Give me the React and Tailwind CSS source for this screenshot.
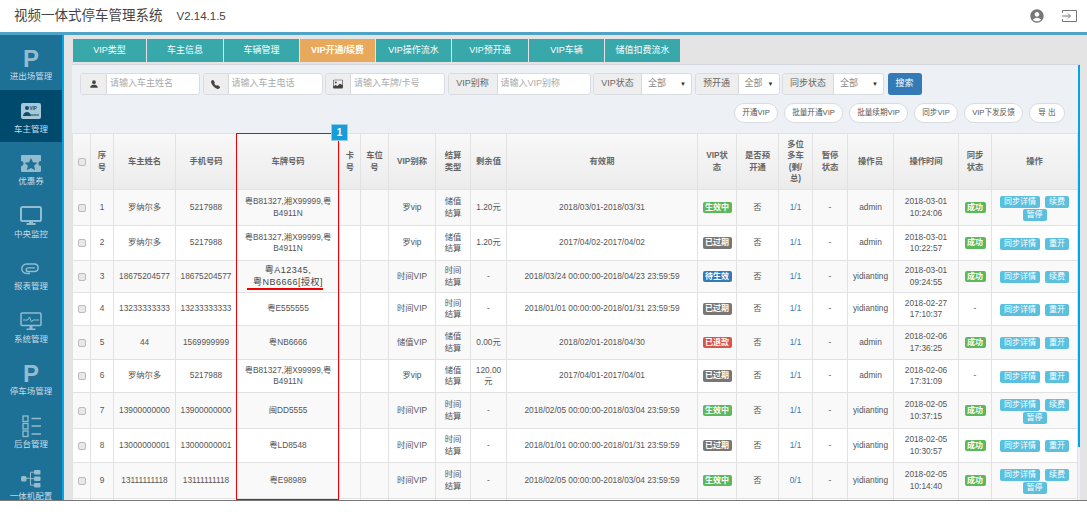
import React from 'react';
import { MdAccountCircle } from 'react-icons/md';
import { BsPersonFill, BsTelephoneFill, BsImage } from 'react-icons/bs';

const FONT = "font-['Liberation_Sans','Noto_Sans_CJK_SC',sans-serif]";

const PIcon = () => <span className="text-[24px] font-bold leading-[21px] text-[#93bccf]">P</span>;

const VipIcon = () => (
  <svg width="20" height="17" viewBox="0 0 20 17">
    <rect width="20" height="16" rx="2" fill="#a8c8d8" />
    <circle cx="6" cy="5" r="2" fill="#0f4c6e" />
    <text x="8.500" y="7" fontSize="4.500" fontWeight="bold" fill="#0f4c6e" fontFamily="Liberation Sans">VIP</text>
    <path d="M2 13c.5-3 2-4 4-4s3.500 1 4 4z" fill="#0f4c6e" />
    <path d="M10 12h8" stroke="#0f4c6e" />
  </svg>
);

const CouponIcon = () => (
  <svg width="20" height="17" viewBox="0 0 20 17">
    <path d="M1 0h18a1 1 0 011 1v5a2.500 2.500 0 000 5v5a1 1 0 01-1 1H1a1 1 0 01-1-1v-5a2.500 2.500 0 000-5V1a1 1 0 011-1z" fill="#93bccf" />
    <path d="M10 3l2 4.300 4.500.5-3.400 3 1 4.400L10 13l-4.100 2.200 1-4.400-3.400-3 4.500-.5z" fill="#1d7096" />
  </svg>
);

const MonitorIcon = () => (
  <svg width="22" height="20" viewBox="0 0 22 20" fill="none">
    <rect x="1" y="1" width="20" height="14" rx="1.500" stroke="#93bccf" strokeWidth="2" />
    <path d="M9 15v2H6.500v2h9v-2H13v-2z" fill="#93bccf" />
  </svg>
);

const ClipIcon = () => (
  <svg width="20" height="16" viewBox="0 0 20 16" fill="none" stroke="#93bccf" strokeWidth="1.400">
    <path d="M9 12.500H5.500a4.700 4.700 0 010-9.500h8.500a3.800 3.800 0 010 7.500H7a1.800 1.800 0 010-3.600h7" />
  </svg>
);

const SystemIcon = () => (
  <svg width="22" height="19" viewBox="0 0 22 19" fill="none">
    <rect x="1" y="1" width="20" height="12.500" rx="1" stroke="#93bccf" strokeWidth="1.500" />
    <path d="M3 8h5l1.500-3 2 5 1.500-2h6" stroke="#93bccf" />
    <path d="M9.500 13.500h3v3h3v1.500h-9v-1.500h3z" fill="#93bccf" />
  </svg>
);

const ListIcon = () => (
  <svg width="19" height="23" viewBox="0 0 19 23" fill="none" stroke="#93bccf" strokeWidth="1.300">
    <rect x="1" y="1" width="5" height="5.500" />
    <rect x="1" y="8.500" width="5" height="5.500" />
    <rect x="1" y="16" width="5" height="5.500" />
    <path d="M9.500 3.500H19M9.500 11H19M9.500 19H19" />
  </svg>
);

const TreeIcon = () => (
  <svg width="20" height="18" viewBox="0 0 20 18" fill="#93bccf">
    <rect x="0" y="6" width="5.500" height="5.500" rx="1.500" />
    <rect x="13" y="0" width="6.500" height="4.500" rx="1" />
    <rect x="13" y="6.500" width="6.500" height="4.500" rx="1" />
    <rect x="13" y="13" width="6.500" height="4.500" rx="1" />
    <path d="M5 8.300h4.500M13 8.700H9.500M13 2.200h-3.500v13H13" fill="none" stroke="#93bccf" />
  </svg>
);

const LogoutIcon = () => (
  <svg width="15" height="12" viewBox="0 0 15 12" fill="none" stroke="#777" strokeWidth="1">
    <path d="M.5 3V.500h14v11H.500V9" />
    <path d="M0 6h8M6 3.500L8.500 6 6 8.500" />
  </svg>
);

const MENU = [
  { label: '进出场管理', icon: <PIcon /> },
  { label: '车主管理', icon: <VipIcon />, active: true },
  { label: '优惠券', icon: <CouponIcon /> },
  { label: '中央监控', icon: <MonitorIcon /> },
  { label: '报表管理', icon: <ClipIcon /> },
  { label: '系统管理', icon: <SystemIcon /> },
  { label: '停车场管理', icon: <PIcon /> },
  { label: '后台管理', icon: <ListIcon /> },
  { label: '一体机配置', icon: <TreeIcon /> },
];

const TABS = [
  { label: 'VIP类型', w: 'w-[73px] ml-[1px]' },
  { label: '车主信息', w: 'w-[76px]' },
  { label: '车辆管理', w: 'w-[75px]' },
  { label: 'VIP开通/续费', w: 'w-[75px]', active: true },
  { label: 'VIP操作流水', w: 'w-[75px]' },
  { label: 'VIP预开通', w: 'w-[76px]' },
  { label: 'VIP车辆', w: 'w-[75px]' },
  { label: '储值扣费流水', w: 'w-[75px]' },
];

const COLS = [18, 23, 62, 61, 103, 21, 28, 47, 35, 36, 191, 39, 42, 34, 35, 46, 65, 33, 86];

const HEADS = ['', '序号', '车主姓名', '手机号码', '车牌号码', '卡号', '车位号', 'VIP别称', '结算类型', '剩余值', '有效期', 'VIP状态', '是否预开通', '多位多车(剩/总)', '暂停状态', '操作员', '操作时间', '同步状态', '操作'];

// padding that makes the narrow header cells wrap where the reference does
const HEAD_PAD = {
  1: 'px-[4px]',
  5: 'px-[3px]',
  6: 'px-[3px]',
  8: 'px-[8px]',
  11: 'px-[6px]',
  12: 'px-[6px]',
  13: 'px-[8px]',
  14: 'px-[7px]',
  17: 'px-[6px]',
};

const STATUS = {
  active: { text: '生效中', cls: 'bg-[#5cb85c]' },
  expired: { text: '已过期', cls: 'bg-[#777777]' },
  pending: { text: '待生效', cls: 'bg-[#337ab7]' },
  refund: { text: '已退款', cls: 'bg-[#d9534f]' },
};

const PLATES = '粤B81327,湘X99999,粤B4911N';

const ROWS = [
  { h: 'h-[36px]', name: '罗纳尔多', phone: '5217988', plate: PLATES, alias: '罗vip', type: '储值结算', left: '1.20元', period: '2018/03/01-2018/03/31', status: 'active', multi: '1/1', op: 'admin', date: '2018-03-01', time: '10:24:06', sync: true, actions: ['续费', '暂停'] },
  { h: 'h-[35px]', name: '罗纳尔多', phone: '5217988', plate: PLATES, alias: '罗vip', type: '储值结算', left: '1.20元', period: '2017/04/02-2017/04/02', status: 'expired', multi: '1/1', op: 'admin', date: '2018-03-01', time: '10:22:57', sync: true, actions: ['重开'] },
  { h: 'h-[32px]', name: '18675204577', phone: '18675204577', auth: true, alias: '时间VIP', type: '时间结算', left: '-', period: '2018/03/24 00:00:00-2018/04/23 23:59:59', status: 'pending', multi: '1/1', op: 'yidianting', date: '2018-03-01', time: '09:24:55', sync: true, actions: ['续费'] },
  { h: 'h-[33px]', name: '13233333333', phone: '13233333333', plate: '粤E555555', alias: '时间VIP', type: '时间结算', left: '-', period: '2018/01/01 00:00:00-2018/01/31 23:59:59', status: 'expired', multi: '1/1', op: 'yidianting', date: '2018-02-27', time: '17:10:37', sync: false, actions: ['重开'] },
  { h: 'h-[34px]', name: '44', phone: '1569999999', plate: '粤NB6666', alias: '储值VIP', type: '储值结算', left: '0.00元', period: '2018/02/01-2018/04/30', status: 'refund', multi: '1/1', op: 'admin', date: '2018-02-06', time: '17:36:25', sync: true, actions: ['重开'] },
  { h: 'h-[33px]', name: '罗纳尔多', phone: '5217988', plate: PLATES, alias: '罗vip', type: '储值结算', left: '120.00元', period: '2017/04/01-2017/04/01', status: 'expired', multi: '1/1', op: 'admin', date: '2018-02-06', time: '17:31:09', sync: false, actions: ['重开'] },
  { h: 'h-[36px]', name: '13900000000', phone: '13900000000', plate: '闽DD5555', alias: '时间VIP', type: '时间结算', left: '-', period: '2018/02/05 00:00:00-2018/03/04 23:59:59', status: 'active', multi: '1/1', op: 'yidianting', date: '2018-02-05', time: '10:37:15', sync: true, actions: ['续费', '暂停'] },
  { h: 'h-[34px]', name: '13000000001', phone: '13000000001', plate: '粤LD8548', alias: '时间VIP', type: '时间结算', left: '-', period: '2018/01/01 00:00:00-2018/01/31 23:59:59', status: 'expired', multi: '1/1', op: 'yidianting', date: '2018-02-05', time: '10:30:57', sync: true, actions: ['重开'] },
  { h: 'h-[36px]', name: '13111111118', phone: '13111111118', plate: '粤E98989', alias: '时间VIP', type: '时间结算', left: '-', period: '2018/02/05 00:00:00-2018/03/04 23:59:59', status: 'active', multi: '0/1', op: 'yidianting', date: '2018-02-05', time: '10:14:40', sync: true, actions: ['续费', '暂停'] },
];

const Addon = ({ w, children }) => (
  <div className={`${w} h-full flex items-center justify-center bg-[#eeeeee] text-[#666] border-r border-[#d8d8d8] shrink-0`}>
    {children}
  </div>
);

const InputGroup = ({ w, addonW, addon, placeholder }) => (
  <div className={`${w} h-[22px] flex rounded-[3px] border border-[#d8dbe0] bg-white overflow-hidden`}>
    <Addon w={addonW}>{addon}</Addon>
    <div className="flex-1 flex items-center pl-[3px] text-[9px] text-[#aaaaaa] whitespace-nowrap overflow-hidden">{placeholder}</div>
  </div>
);

const SelectGroup = ({ w, addonW, label }) => (
  <div className={`${w} h-[22px] flex rounded-[3px] border border-[#d8dbe0] bg-white overflow-hidden`}>
    <Addon w={addonW}><span className="text-[9px]">{label}</span></Addon>
    <div className="flex-1 flex items-center justify-between pl-[6px] pr-[5px] text-[9px] text-[#888]">
      <span>全部</span>
      <span className="text-[6px] text-[#333]">▼</span>
    </div>
  </div>
);

const PillButton = ({ w, children }) => (
  <button className={`${w} h-[20px] rounded-full border border-[#d8dbe0] bg-white text-[7.600px] text-[#555] whitespace-nowrap`}>
    {children}
  </button>
);

const Info = ({ children }) => (
  <span className="inline-block h-[12px] px-[4px] mx-[2.500px] rounded-[2px] bg-[#5bc0de] text-white text-[8px] leading-[12px] whitespace-nowrap">
    {children}
  </span>
);

const Badge = ({ cls, children }) => (
  <span className={`inline-block h-[11.500px] px-[2.500px] rounded-[2px] text-white text-[8px] font-bold leading-[11.500px] whitespace-nowrap ${cls}`}>
    {children}
  </span>
);

const Checkbox = () => (
  <span className="inline-block align-middle w-[8px] h-[8px] rounded-[2px] border border-[#bbb] bg-[#e8e8e8]" />
);

const cell = 'border border-[#e2e2e2] px-[1px] text-center align-middle';

function Row({ row, index }) {
  const st = STATUS[row.status];
  return (
    <tr className={`${row.h} ${index % 2 === 0 ? 'bg-[#f9f9f9]' : 'bg-white'}`}>
      <td className={cell}><Checkbox /></td>
      <td className={cell}>{index + 1}</td>
      <td className={cell}>{row.name}</td>
      <td className={cell}>{row.phone}</td>
      <td className={`${cell} px-[6px]`}>
        {row.auth ? (
          <div className="text-[9px] leading-[12px] tracking-[0.500px] text-[#444]">
            粤A12345,
            <br />
            <span className="inline-block -ml-[6px] pl-[6px] border-b-2 border-[#f00000] leading-[11px] whitespace-nowrap">粤NB6666[授权]</span>
          </div>
        ) : (
          row.plate
        )}
      </td>
      <td className={cell} />
      <td className={cell} />
      <td className={cell}>{row.alias}</td>
      <td className={`${cell} px-[8px]`}>{row.type}</td>
      <td className={cell}>{row.left}</td>
      <td className={cell}>{row.period}</td>
      <td className={cell}><Badge cls={st.cls}>{st.text}</Badge></td>
      <td className={cell}>否</td>
      <td className={`${cell} text-[#337ab7]`}>{row.multi}</td>
      <td className={cell}>-</td>
      <td className={cell}>{row.op}</td>
      <td className={cell}>{row.date}<br />{row.time}</td>
      <td className={cell}>{row.sync ? <Badge cls="bg-[#5cb85c]">成功</Badge> : '-'}</td>
      <td className={`${cell} leading-[13px]`}>
        <Info>同步详情</Info>
        {row.actions.map((a) => <Info key={a}>{a}</Info>)}
      </td>
    </tr>
  );
}

export default function App() {
  return (
    <div className={`${FONT} w-[1087px] h-[518px] bg-white overflow-hidden`}>
      {/* Header */}
      <header className="h-[32px] flex items-center justify-between pl-[14px] pr-[10px]">
        <div className="flex items-baseline gap-[14px]">
          <h1 className="text-[13.500px] text-[#444]">视频一体式停车管理系统</h1>
          <span className="text-[11.500px] text-[#444]">V2.14.1.5</span>
        </div>
        <div className="flex items-center gap-[17px]">
          <MdAccountCircle className="w-[16px] h-[16px] text-[#777]" />
          <LogoutIcon />
        </div>
      </header>
      <div className="h-[3px] bg-[#4fa3c7]" />

      {/* Body */}
      <main className="h-[466px] flex overflow-hidden border-b border-[#777]">
        <aside className="w-[64px] shrink-0 bg-[#1d7096] border-r-2 border-[#00a7e8] pt-[2px] overflow-hidden">
          {MENU.map((m) => (
            <div key={m.label} className={`h-[52.500px] shrink-0 pt-[11px] flex flex-col items-center ${m.active ? 'bg-[#004a6e]' : ''}`}>
              <div className="h-[21px] flex items-center justify-center">{m.icon}</div>
              <div className="mt-[1px] text-[8.500px] leading-[12px] text-[#c8dce6] whitespace-nowrap">{m.label}</div>
            </div>
          ))}
        </aside>

        <section className="flex-1 bg-[#e4e4e4] pl-[8px] pr-[7px] pt-[4px] min-w-0">
          {/* Tabs */}
          <div className="flex gap-[1px] h-[23px]">
            {TABS.map((t) => (
              <div
                key={t.label}
                className={`${t.w} flex items-center justify-center text-[9px] text-white whitespace-nowrap ${t.active ? 'bg-[#e9a95c] font-bold' : 'bg-[#38a8ab]'}`}
              >
                {t.label}
              </div>
            ))}
          </div>

          {/* Panel */}
          <div className="relative mt-[2px] h-[470px] bg-[#edf0f5] border-t border-[#d5d5dd]">
            <div className="absolute right-0 top-0 w-[2px] h-[382px] bg-[#00a7e8]" />

            <div className="pl-[8px] pt-[8px] flex gap-[2.500px]">
              <InputGroup w="w-[120px]" addonW="w-[26px]" addon={<BsPersonFill className="w-[10px] h-[10px] text-[#444]" />} placeholder="请输入车主姓名" />
              <InputGroup w="w-[120px]" addonW="w-[25px]" addon={<BsTelephoneFill className="w-[9px] h-[9px] text-[#444]" />} placeholder="请输入车主电话" />
              <InputGroup w="w-[120px]" addonW="w-[25px]" addon={<BsImage className="w-[10px] h-[10px] text-[#444]" />} placeholder="请输入车牌/卡号" />
              <InputGroup w="w-[143px]" addonW="w-[49px]" addon={<span className="text-[9px]">VIP别称</span>} placeholder="请输入VIP别称" />
              <SelectGroup w="w-[99px]" addonW="w-[48px]" label="VIP状态" />
              <SelectGroup w="w-[85px]" addonW="w-[43px]" label="预开通" />
              <SelectGroup w="w-[102px]" addonW="w-[51px]" label="同步状态" />
              <button className="ml-[1px] w-[34px] h-[22px] rounded-[3px] bg-[#337ab7] text-white text-[9px]">搜索</button>
            </div>

            <div className="mt-[8px] pr-[15px] flex justify-end gap-[6px]">
              <PillButton w="w-[44px]">开通VIP</PillButton>
              <PillButton w="w-[59px]">批量开通VIP</PillButton>
              <PillButton w="w-[59px]">批量续期VIP</PillButton>
              <PillButton w="w-[44px]">同步VIP</PillButton>
              <PillButton w="w-[59px]">VIP下发反馈</PillButton>
              <PillButton w="w-[36px]">导 出</PillButton>
            </div>

            {/* Table */}
            <div className="relative mt-[10px]">
              <table className="table-fixed border-collapse w-[1005px] text-[8.300px] leading-[11.500px] text-[#555]">
                <colgroup>
                  {COLS.map((c, i) => <col key={i} style={{ width: c }} />)}
                </colgroup>
                <thead>
                  <tr className="h-[56px] bg-gradient-to-b from-[#f8f8f8] to-[#ececec]">
                    {HEADS.map((h, i) => (
                      <th key={i} className={`${cell} font-bold text-[#666] ${HEAD_PAD[i] || ''}`}>
                        {i === 0 ? <Checkbox /> : h}
                      </th>
                    ))}
                  </tr>
                </thead>
                <tbody>
                  {ROWS.map((r, i) => <Row key={i} row={r} index={i} />)}
                  <tr className="h-[36px] bg-white">
                    {COLS.map((c, i) => <td key={i} className={cell} />)}
                  </tr>
                </tbody>
              </table>

              {/* Red annotation box */}
              <div className="absolute left-[164px] top-0 w-[103px] h-[367px] border border-[#f00000] pointer-events-none" />
              <div className="absolute left-[259px] top-[-9px] w-[17px] h-[17px] bg-[#1a9cd8] border border-[#8fd0ee] flex items-center justify-center text-white text-[10px] font-bold">1</div>
            </div>
          </div>
        </section>
      </main>
    </div>
  );
}
